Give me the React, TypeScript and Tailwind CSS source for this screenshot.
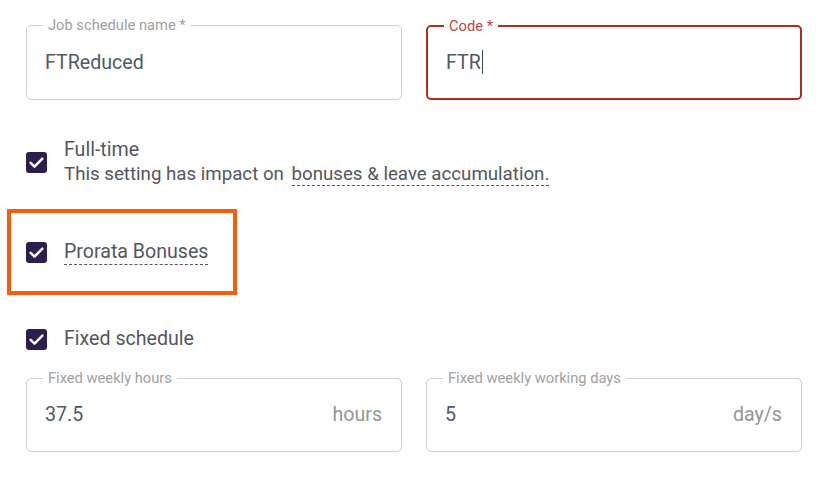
import React from "react";

const font = { fontFamily: "Roboto, 'Noto Sans', sans-serif" } as const;

function Check() {
  return (
    <div className="w-[21px] h-[21px] rounded-[3px] bg-[#2d1f4d] flex items-center justify-center shrink-0">
      <svg width="21" height="21" viewBox="0 0 21 21" fill="none" className="shrink-0">
        <path d="M4.6 10.8l3.9 3.9L16.4 6.6" stroke="white" strokeWidth="2.4" strokeLinecap="round" strokeLinejoin="round" />
      </svg>
    </div>
  );
}

function Field({
  label,
  value,
  suffix,
  focused,
  cursor,
  h,
}: {
  label: string;
  value: string;
  suffix?: string;
  focused?: boolean;
  cursor?: boolean;
  h: string;
}) {
  return (
    <div
      className={
        "relative rounded-[5px] flex items-center justify-between " +
        h +
        " " +
        (focused ? "border-2 border-[#b22d20] pl-[18px] pr-[18px]" : "border border-[#cfcfcf] pl-[18px] pr-[19px]")
      }
    >
      <span
        className={
          "absolute top-[-10px] left-[16px] px-[5px] bg-white text-[14.7px] leading-[18px] " +
          (focused ? "text-[#c0473b] left-[15px]" : "text-[#a0a0a0]")
        }
      >
        {label}
      </span>
      <span className="text-[19.6px] text-[#505b66] flex items-center">
        {value}
        {cursor && <span className="inline-block w-[1px] h-[24px] bg-[#3a4550] ml-[1px]" />}
      </span>
      {suffix && <span className="text-[19.6px] text-[#959595]">{suffix}</span>}
    </div>
  );
}

export default function App() {
  return (
    <div style={font} className="w-[827px] h-[477px] bg-white pl-[26px] pr-[25px] pt-[25px] overflow-hidden">
      <div className="grid grid-cols-2 gap-x-[24px]">
        <Field label="Job schedule name *" value="FTReduced" h="h-[75px]" />
        <Field label="Code *" value="FTR" focused cursor h="h-[75px]" />
      </div>

      <div className="mt-[38px] flex items-center gap-[17px]">
        <Check />
        <div className="leading-[24px] text-[#52575f]">
          <div className="text-[19.6px]">Full-time</div>
          <div className="text-[18.7px]">
            This setting has impact on{" "}
            <span className="ml-[3px] border-b border-dashed border-[#555]">bonuses &amp; leave accumulation.</span>
          </div>
        </div>
      </div>

      <div className="mt-[23px] ml-[-19px] w-[230px] h-[86px] border-[4px] border-[#ff5a0a] flex items-center pl-[15px] gap-[17px]">
        <Check />
        <span className="text-[19.6px] leading-[24px] text-[#52575f] border-b border-dashed border-[#555]">Prorata Bonuses</span>
      </div>

      <div className="mt-[32px] flex items-center gap-[17px]">
        <Check />
        <span className="text-[19.6px] leading-[24px] text-[#52575f]">Fixed schedule</span>
      </div>

      <div className="mt-[27px] grid grid-cols-2 gap-x-[24px]">
        <Field label="Fixed weekly hours" value="37.5" suffix="hours" h="h-[74px]" />
        <Field label="Fixed weekly working days" value="5" suffix="day/s" h="h-[74px]" />
      </div>
    </div>
  );
}
